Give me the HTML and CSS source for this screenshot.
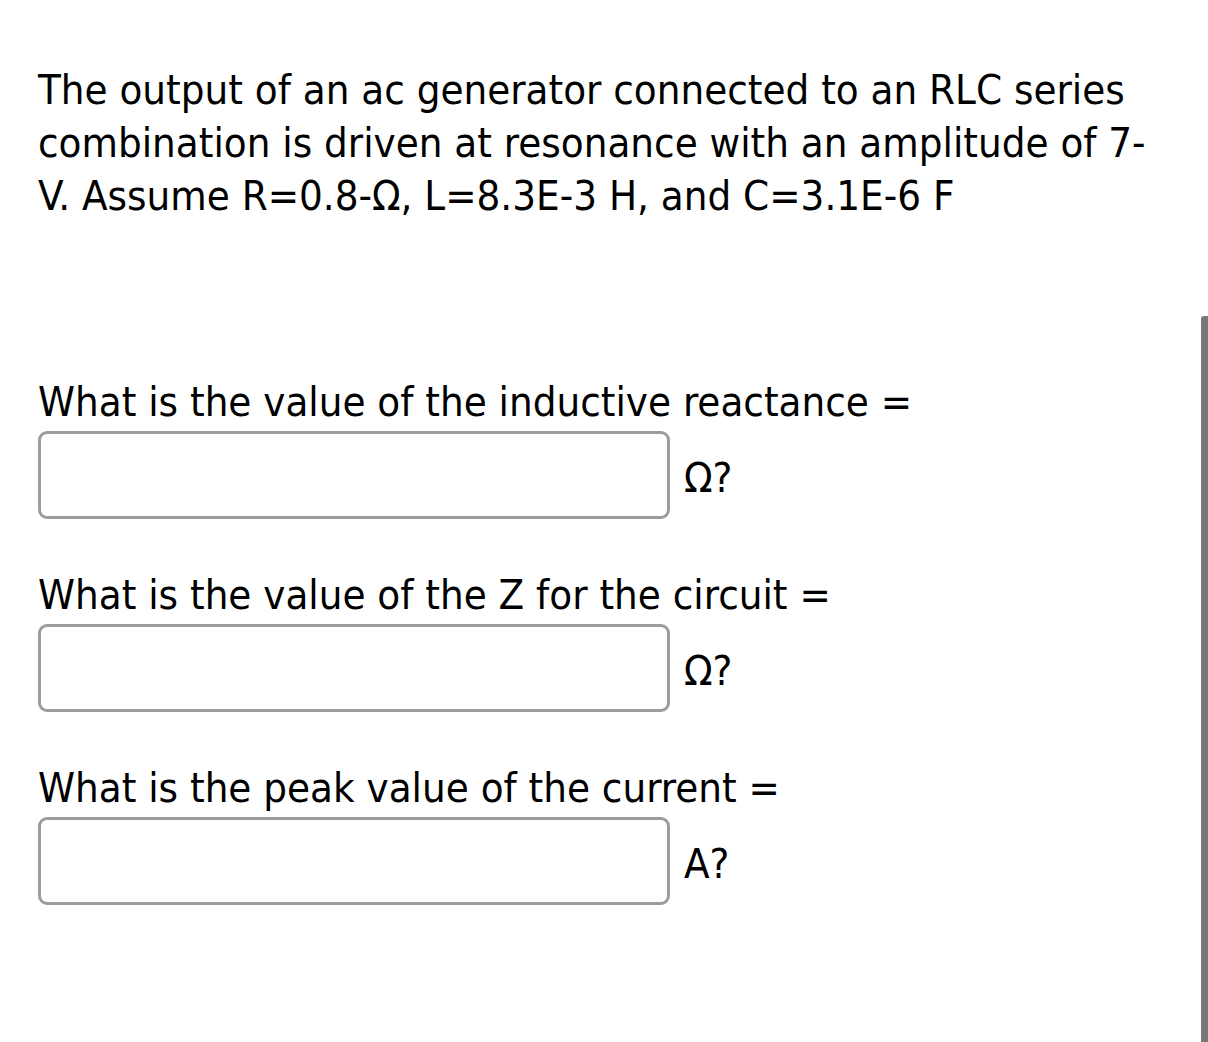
FILE: index.html
```html
<!DOCTYPE html>
<html>
<head>
<meta charset="utf-8">
<link rel="stylesheet" href="styles.css">
</head>
<body>
<main class="page">
  <p class="intro">The output of an ac generator connected to an RLC series combination is driven at resonance with an amplitude of 7-V. Assume R=0.8-Ω, L=8.3E-3 H, and C=3.1E-6 F</p>
  <section class="question first">
    <div class="label">What is the value of the inductive reactance =</div>
    <div class="answer"><span class="box"></span><span class="unit">Ω?</span></div>
  </section>
  <section class="question">
    <div class="label">What is the value of the Z for the circuit =</div>
    <div class="answer"><span class="box"></span><span class="unit">Ω?</span></div>
  </section>
  <section class="question">
    <div class="label">What is the peak value of the current =</div>
    <div class="answer"><span class="box"></span><span class="unit">A?</span></div>
  </section>
</main>
<div class="scrollbar"></div>
</body>
</html>
```

FILE: styles.css
```css
html, body {
  margin: 0;
  padding: 0;
  background: #fff;
}
body {
  font-family: "DejaVu Sans Condensed", "DejaVu Sans", sans-serif;
  color: #000;
  font-size: 41.6px;
  overflow: hidden;
}
.page {
  padding: 63px 40px 0 38px;
  width: 1130px;
}
.intro {
  margin: 0;
  line-height: 53px;
}
.question {
  margin-top: 52px;
}
.question.first {
  margin-top: 156px;
}
.label {
  line-height: 48px;
}
.answer {
  display: flex;
  align-items: center;
  gap: 14px;
  margin-top: 5px;
}
.box {
  display: block;
  width: 626px;
  height: 82px;
  border: 3px solid #9d9d9d;
  border-radius: 9px;
  background: #fff;
}
.unit {
  line-height: 48px;
  padding-top: 6px;
}
.scrollbar {
  position: absolute;
  right: 0;
  top: 316px;
  width: 7px;
  height: 726px;
  background: #777;
  border-radius: 3px 0 0 0;
}
```
